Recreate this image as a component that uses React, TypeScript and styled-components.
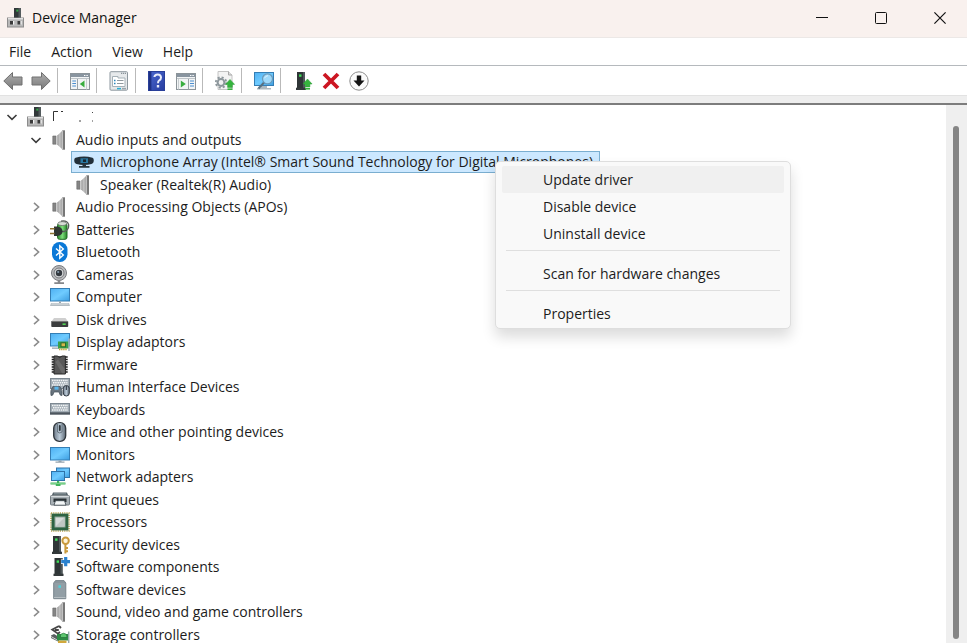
import React from 'react';
import styled, { createGlobalStyle, css } from 'styled-components';

const GlobalStyle = createGlobalStyle`
  * { box-sizing: border-box; }
  html, body { margin: 0; background: #fff; }
  body, button {
    font-family: "Open Sans", "Noto Sans", sans-serif;
    font-size: 14px;
    line-height: 22px;
    color: #1c1c1c;
  }
  button { border: 0; padding: 0; background: transparent; }
`;

const Window = styled.div`
  display: flex;
  flex-direction: column;
  height: 100vh;
  overflow: hidden;
`;

const TitleBar = styled.header`
  display: flex;
  align-items: center;
  gap: 6px;
  flex: none;
  height: 38px;
  padding: 0 4px 2px 6px;
  background: #f9f1ee;
  border-bottom: 1px solid #ece8e6;
`;

const Title = styled.h1`
  flex: 1;
  margin: 0;
  font-size: 14px;
  font-weight: 400;
  color: #111;
`;

const CaptionButtons = styled.div`
  display: flex;
  gap: 12px;
`;

const CaptionButton = styled.button`
  display: grid;
  place-items: center;
  width: 47px;
  height: 32px;
`;

const MenuBar = styled.nav`
  display: flex;
  align-items: center;
  flex: none;
  gap: 20px;
  height: 28px;
  padding: 0 9px;
  border-bottom: 1px solid #b5b9bd;
`;

const MenuBarButton = styled.button`
  line-height: 24px;
`;

const Toolbar = styled.div`
  display: flex;
  align-items: center;
  flex: none;
  height: 29px;
`;

const ToolGroup = styled.div<{ $first?: boolean }>`
  display: flex;
  align-items: center;
  gap: 8px;
  height: 25px;
  padding: 0 6px 0 ${(p) => (p.$first ? 3 : 12)}px;
  &:not(:last-child) { border-right: 1px solid #b9b9b9; }
`;

const ToolButton = styled.button`
  display: grid;
  place-items: center;
  width: 20px;
  height: 24px;
`;

const Strip = styled.div`
  flex: none;
  height: 10px;
  background: #eee;
  border-top: 1px solid #e2e2e2;
  border-bottom: 2px solid #7d7d7d;
`;

const Body = styled.main`
  display: flex;
  flex: 1;
  min-height: 0;
`;

const Tree = styled.ul`
  flex: 1;
  min-width: 0;
  margin: 0;
  padding: 1px 0 0;
  list-style: none;
  overflow: hidden;
`;

const TreeRow = styled.li<{ $level: number }>`
  display: flex;
  align-items: center;
  position: relative;
  height: 22px;
  padding-left: ${(p) => 2 + p.$level * 24}px;
  &:nth-child(even) { height: 23px; }
`;

const Expander = styled.button`
  display: grid;
  place-items: center;
  flex: none;
  width: 20px;
  height: 20px;
`;

const ExpanderSpace = styled.span`
  flex: none;
  width: 20px;
`;

const Item = styled.span<{ $selected?: boolean }>`
  display: flex;
  align-items: center;
  gap: 6px;
  height: 22px;
  margin-left: 1px;
  padding: 0 6px 0 2px;
  border: 1px solid transparent;
  white-space: nowrap;
  ${(p) =>
    p.$selected &&
    css`
      background: #cce8ff;
      border-color: #7aaed0;
    `}
`;

const ScrollTrack = styled.div`
  flex: none;
  width: 21px;
  padding: 21px 8px 4px 7px;
  background: #efefef;
`;

const ScrollThumb = styled.div`
  height: 100%;
  border-radius: 3px;
  background: #858585;
`;

const ContextMenu = styled.div`
  position: absolute;
  z-index: 2;
  top: 10px;
  left: 495px;
  width: 296px;
  padding: 4px 6px 1px;
  background: #f9f9f9;
  border: 1px solid #dedede;
  border-radius: 5px;
  box-shadow: 0 8px 14px rgba(0, 0, 0, 0.14);
`;

const ContextItem = styled.button<{ $active?: boolean }>`
  display: block;
  width: 100%;
  height: 27px;
  padding-left: 41px;
  border-radius: 2px;
  text-align: left;
  line-height: 26px;
  background: ${(p) => (p.$active ? '#f0f0f0' : 'transparent')};
`;

const Divider = styled.hr`
  margin: 3px 4px 9px;
  border: 0;
  border-top: 1px solid #dfdfdf;
`;

type IconProps = { children: React.ReactNode };

const Icon = ({ children }: IconProps) => (
  <svg width="20" height="20" viewBox="0 0 20 20" aria-hidden="true">
    {children}
  </svg>
);

const GradientDefs = styled.svg`
  display: block;
`;

const Gradients = () => (
  <GradientDefs width="0" height="0" aria-hidden="true">
    <defs>
      <linearGradient id="metal" x1="0" x2="1">
        <stop offset="0" stopColor="#8f8f8f" />
        <stop offset="0.5" stopColor="#c4c4c4" />
        <stop offset="1" stopColor="#8a8a8a" />
      </linearGradient>
      <linearGradient id="screen" x1="0" y1="0" x2="1" y2="1">
        <stop offset="0" stopColor="#4fb0f2" />
        <stop offset="0.5" stopColor="#6fcbff" />
        <stop offset="1" stopColor="#3d9de0" />
      </linearGradient>
      <linearGradient id="arrow" x1="0" y1="0" x2="0" y2="1">
        <stop offset="0" stopColor="#adadad" />
        <stop offset="1" stopColor="#7a7a7a" />
      </linearGradient>
      <linearGradient id="help" x1="0" y1="0" x2="1" y2="1">
        <stop offset="0" stopColor="#4b68d0" />
        <stop offset="1" stopColor="#263c9f" />
      </linearGradient>
      <linearGradient id="green" x1="0" x2="1">
        <stop offset="0" stopColor="#2c8a2c" />
        <stop offset="0.5" stopColor="#7fe07c" />
        <stop offset="1" stopColor="#248026" />
      </linearGradient>
      <linearGradient id="steel" x1="0" x2="1">
        <stop offset="0" stopColor="#6d7a88" />
        <stop offset="0.5" stopColor="#bccbd8" />
        <stop offset="1" stopColor="#5a6672" />
      </linearGradient>
    </defs>
  </GradientDefs>
);

const HostIcon = () => (
  <Icon>
    <rect x="8" y="0" width="7" height="11" fill="#32383a" />
    <rect x="12.5" y="0" width="2.5" height="11" fill="#535b5d" />
    <rect x="10.3" y="1.6" width="2" height="2" fill="#35a94a" />
    <rect x="1.5" y="10" width="16" height="9" fill="#b8b8b8" stroke="#8c8c8c" />
    <path d="M2 10.7H17" stroke="#e2e2e2" strokeWidth="1.4" />
    <path d="M4 13H7V16.5H4ZM11.5 13H14.5V16.5H11.5Z" fill="#3a3a3a" />
    <path d="M7 13H8.2V16.5H7ZM14.5 13H15.7V16.5H14.5Z" fill="#f4f4f4" />
  </Icon>
);

const SpeakerIcon = () => (
  <Icon>
    <path d="M2.8 6H6.2V14.2H2.8Z" fill="#858585" stroke="#666" strokeWidth="0.6" />
    <path d="M6.8 6L12.8 .3V19.7L6.8 14.2Z" fill="url(#metal)" />
    <path d="M6.9 6V14.2" stroke="#efefef" strokeWidth="0.8" />
    <path d="M12.5 .3H15V19.7H12.5Z" fill="#777" />
    <path d="M12.3 1V19" stroke="#d6d6d6" strokeWidth="0.9" />
  </Icon>
);

const MicIcon = () => (
  <Icon>
    <path d="M1.5 5.8Q10 3 18.5 5.8Q20 6.4 19.8 9Q19.5 11.8 17.5 12Q10 13.8 2.5 12Q.5 11.8 .2 9Q0 6.4 1.5 5.8Z" fill="#22303a" />
    <rect x="6.5" y="6.3" width="7.5" height="4.7" fill="#2878a3" />
    <path d="M9 7.4H12V10H9Z" fill="#17262f" />
    <path d="M8.5 12.5H12V14H15.5V15.8H5V14H8.5Z" fill="#26343d" />
  </Icon>
);

const BatteryIcon = () => (
  <Icon>
    <rect x="7.5" y="3.5" width="9.5" height="15.8" rx="2" fill="url(#green)" stroke="#206a24" />
    <ellipse cx="12.2" cy="3.6" rx="4.4" ry="2" fill="#d7ddd6" stroke="#626a62" strokeWidth="0.7" />
    <path d="M11 1.2Q17 0 18.6 4.5Q19.3 9.5 14.5 11.5H11" fill="none" stroke="#5a5f5c" strokeWidth="1.3" />
    <path d="M4 6.5H7Q12.5 7 12.5 11.3T7 16H4Z" fill="#2f3632" />
    <path d="M0 8.8H4.5M0 13.6H4.5" stroke="#8f7330" strokeWidth="1.5" />
  </Icon>
);

const BluetoothIcon = () => (
  <Icon>
    <rect x="2" y="0" width="15.5" height="20" rx="7.5" fill="#0a78d7" />
    <path d="M6 6.5L13.3 13L9.8 16.2V3.8L13.3 7L6 13.5" fill="none" stroke="#fff" strokeWidth="1.4" />
  </Icon>
);

const CameraIcon = () => (
  <Icon>
    <circle cx="9" cy="8" r="7.5" fill="#b9babc" stroke="#797b7f" />
    <circle cx="9" cy="8" r="5" fill="#d6d8da" stroke="#77797c" />
    <circle cx="9" cy="8" r="3.2" fill="#33383e" />
    <circle cx="8.2" cy="7" r="1.1" fill="#8499aa" />
    <path d="M7.7 15H10.3V17.2H14V19H4.3V17.2H7.7Z" fill="#85878a" />
  </Icon>
);

const ComputerIcon = () => (
  <Icon>
    <rect x=".5" y="1.5" width="19" height="12.5" fill="url(#screen)" stroke="#347eb5" />
    <path d="M9 14.5H11V16H9Z" fill="#9aa6ae" />
    <path d="M1 16H19L20 19H0Z" fill="#b3bcc2" />
    <path d="M1.5 17H18.5" stroke="#e6eaec" strokeWidth="0.8" />
  </Icon>
);

const DiskIcon = () => (
  <Icon>
    <path d="M4 8H15.5L18 11.5H1.5Z" fill="#cfcfcf" />
    <rect x="1.3" y="11" width="16.9" height="6" rx=".8" fill="#3b3d3e" />
    <path d="M1.5 11.5H18" stroke="#777" />
    <rect x="12.5" y="13.4" width="3.2" height="1.6" fill="#53d553" />
  </Icon>
);

const DisplayIcon = () => (
  <Icon>
    <rect x=".5" y="1.5" width="19" height="12.5" fill="url(#screen)" stroke="#347eb5" />
    <rect x="2" y="15.5" width="7" height="1.3" fill="#9ba5ad" />
    <rect x="8" y="9.5" width="11" height="7" fill="#39a04a" />
    <path d="M19 6.5V19" stroke="#a9b6bc" strokeWidth="1.5" />
    <rect x="11" y="10.8" width="4.5" height="4" fill="#d6b549" stroke="#276b30" />
    <path d="M9 17.4H17" stroke="#c9a638" strokeWidth="1.8" strokeDasharray="1.4 .7" />
  </Icon>
);

const FirmwareIcon = () => (
  <Icon>
    <path d="M1.7 2H17.7M1.7 4.5H17.7M1.7 7H17.7M1.7 9.5H17.7M1.7 12H17.7M1.7 14.5H17.7M1.7 17H17.7" stroke="#1f1f1f" strokeWidth="1.4" />
    <path d="M4 1H7.3Q9.7 4 12.1 1H15.4V19H4Z" fill="#585858" stroke="#292929" />
    <path d="M5.5 7L12 18.3H14.8V14L8 4.5Z" fill="#6a6a6a" />
  </Icon>
);

const Keys = ({ y = 0, dark = true }: { y?: number; dark?: boolean }) => (
  <g>
    <rect x=".5" y={4.5 + y} width="19" height="10" fill="#a3adb5" stroke="#7e8992" />
    <path
      d={`M2 ${6.5 + y}H18M3 ${8.8 + y}H17.5M2 ${11 + y}H18`}
      stroke="#f4f6f7"
      strokeWidth="1.4"
      strokeDasharray="1.5 .7"
    />
    {dark && <rect x="0" y={13.3 + y} width="20" height="2.4" fill="#4d565e" />}
  </g>
);

const HidIcon = () => (
  <Icon>
    <Keys y={-3} dark={false} />
    <path d="M1 18.5Q-.3 13 3 9.5H10Q13 13 12 18.5Q10 19.3 9 15H4Q3 19.3 1 18.5Z" fill="#68747e" stroke="#46515a" strokeWidth="0.7" />
    <rect x="4.5" y="9.7" width="4" height="3" fill="#5cb5ea" />
    <rect x="13.3" y="8.5" width="6" height="10.5" rx="3" fill="url(#steel)" stroke="#303942" />
    <path d="M16.3 9V13" stroke="#222a31" />
  </Icon>
);

const KeyboardIcon = () => (
  <Icon>
    <Keys y={-1} />
  </Icon>
);

const MouseIcon = () => (
  <Icon>
    <rect x="3.7" y=".7" width="12" height="18.6" rx="5.5" fill="url(#steel)" stroke="#30363c" strokeWidth="1.3" />
    <path d="M7.5 1.5V10Q9.7 12 12 10V1.5" fill="#aab9c6" stroke="#59646f" strokeWidth="0.8" />
    <rect x="8.9" y="3" width="1.8" height="6" rx=".9" fill="#2d3339" />
  </Icon>
);

const MonitorIcon = () => (
  <Icon>
    <rect x=".5" y="2.5" width="19" height="12.5" fill="url(#screen)" stroke="#347eb5" />
    <path d="M8.5 15.5H11.5V16.5H14.5V17.8H5.5V16.5H8.5Z" fill="#93a3ae" />
  </Icon>
);

const NetworkIcon = () => (
  <Icon>
    <rect x="6.5" y="1" width="13" height="9.5" fill="url(#screen)" stroke="#2f74a9" />
    <rect x="1.5" y="4.5" width="13" height="9" fill="url(#screen)" stroke="#2f74a9" />
    <path d="M7 14H9.2V15.5H15.5V17.5H10.5V19H5.8V17.5H.5V15.5H7Z" fill="#43b55c" />
    <path d="M1 16.5H15" stroke="#8fdc9c" strokeWidth="0.7" />
  </Icon>
);

const PrinterIcon = () => (
  <Icon>
    <path d="M3 2.5H17L18.5 6H1.5Z" fill="#59656c" />
    <path d="M4 3.8H16" stroke="#8e999f" strokeWidth="1" />
    <rect x=".5" y="5.5" width="19" height="9.5" rx="1" fill="#a7afb4" stroke="#767f85" />
    <path d="M3.5 8.5H16.5V12H3.5Z" fill="#2b3236" />
    <path d="M5.5 10.7H14.5L16 15.2H4Z" fill="#f4f7f8" stroke="#39434a" strokeWidth="0.8" />
    <path d="M1.2 6.4H18.8" stroke="#dce0e2" />
  </Icon>
);

const ProcessorIcon = () => (
  <Icon>
    <rect x="1" y="1" width="18" height="18" fill="none" stroke="#b7a454" strokeWidth="1.6" strokeDasharray="1.2 1" />
    <rect x="1.6" y="1.6" width="16.8" height="16.8" fill="#2d6342" />
    <rect x="5" y="5" width="10" height="10" fill="#d7dcda" stroke="#8fa599" />
    <path d="M5.5 14.5L14.5 5.5V14.5Z" fill="#c0c7c4" />
  </Icon>
);

const Tower = ({ x = 3 }: { x?: number }) => (
  <g transform={`translate(${x} 0)`}>
    <path d="M.5 1H8.5V17H.5Z" fill="#2f3537" />
    <path d="M6.5 1H8.5V17H6.5Z" fill="#4f585b" />
    <rect x="2.6" y="3.4" width="2.4" height="2.4" fill="#3fe05a" />
    <path d="M-.5 16.7H9.5V19H-.5Z" fill="#34393b" />
  </g>
);

const SecurityIcon = () => (
  <Icon>
    <Tower x={2.5} />
    <circle cx="15.6" cy="5.8" r="3.2" fill="#fff4d7" stroke="#c99a3d" strokeWidth="2" />
    <path d="M15.4 9V18.5M15.6 13H18M15.6 16.2H18" stroke="#c99a3d" strokeWidth="2" />
  </Icon>
);

const ComponentIcon = () => (
  <Icon>
    <Tower x={4} />
    <path d="M15.7 0V9.4M11 4.7H20" stroke="#fff" strokeWidth="4.6" />
    <path d="M15.7 0V9.2M11.2 4.6H20" stroke="#2b82cf" strokeWidth="3.2" />
  </Icon>
);

const SoftwareIcon = () => (
  <Icon>
    <path d="M3.7 3L5.5 .6H14L15.8 3V18.7H3.7Z" fill="#89959c" stroke="#7b878e" />
    <path d="M4.5 3H15V17.8H4.5Z" fill="#929ea5" />
    <rect x="8.4" y="5.3" width="2.6" height="2.6" fill="#50d0d8" />
    <path d="M4 17.5H15.5" stroke="#b6bec2" />
  </Icon>
);

const StorageIcon = () => (
  <Icon>
    <path d="M9 1L2.2 4.7L8 8.7L10 7M9 1L11 3M4.9 5H8.8" fill="none" stroke="#474747" strokeWidth="1.8" />
    <path d="M1 10.5L4 9L9 12V17L1 13Z" fill="#5a5f61" />
    <path d="M1 11.5L8 15.5" stroke="#d4d4d4" />
    <path d="M7 9H18V15.5H7Z" fill="#2e8b45" />
    <path d="M10.5 9.5Q13.5 7 16.5 9.5L17 12.5H10.5Z" fill="#5dc66f" stroke="#24713a" strokeWidth="0.7" />
    <path d="M18.7 6.5V19" stroke="#98a9ad" strokeWidth="1.5" />
    <path d="M8 17H16.5" stroke="#d1a83d" strokeWidth="2.8" />
  </Icon>
);

const ArrowShape = ({ flip }: { flip?: boolean }) => (
  <Icon>
    <path
      d="M.8 10L9.5 1.5V6H19V14H9.5V18.5Z"
      transform={flip ? 'matrix(-1 0 0 1 20 0)' : undefined}
      fill="url(#arrow)"
      stroke="#707070"
      strokeLinejoin="round"
    />
  </Icon>
);

const GreenUp = ({ x, y }: { x: number; y: number }) => (
  <g transform={`translate(${x} ${y})`}>
    <path d="M5 0L9.6 5H7.4V8H2.6V5H.4Z" fill="#35b43d" stroke="#2b9a34" strokeWidth="0.5" />
    <path d="M2.5 9.8H7.5" stroke="#35b43d" strokeWidth="1.6" />
  </g>
);

const PanelFrame = () => (
  <g>
    <rect x=".5" y="2.5" width="19" height="16" fill="#f2f4f5" stroke="#8c9499" />
    <path d="M1 3H19V6H1Z" fill="#8995a0" />
    <path d="M14 4.5H18" stroke="#fff" strokeDasharray="1 .6" />
    <path d="M1 7.5H19" stroke="#bfc5c9" />
  </g>
);

const ShowTreeIcon = () => (
  <Icon>
    <PanelFrame />
    <path d="M7.5 8V18.5" stroke="#9aa2a7" />
    <path d="M2.3 10H6M2.3 12.5H6M2.3 15H6" stroke="#4b8ed0" strokeWidth="1.2" />
    <path d="M14.5 9.5V16.5L9.8 13Z" fill="#38ad3e" />
    <path d="M16.5 8V18.5" stroke="#c7cdd0" />
  </Icon>
);

const ActionPaneIcon = () => (
  <Icon>
    <PanelFrame />
    <path d="M12.5 8V18.5" stroke="#9aa2a7" />
    <path d="M14 10H18M14 12.5H18M14 15H18" stroke="#4b8ed0" strokeWidth="1.2" />
    <path d="M4.8 9.5V16.5L9.8 13Z" fill="#38ad3e" />
    <path d="M2.5 8V18.5" stroke="#c7cdd0" />
  </Icon>
);

const PropertiesIcon = () => (
  <Icon>
    <rect x="1" y=".7" width="17.5" height="18.5" rx="1" fill="#e6e9eb" stroke="#8d979e" />
    <path d="M12 2.3H17" stroke="#747e85" strokeDasharray="1.2 .7" />
    <path d="M3.5 5.5H9V7H16V15.5H3.5Z" fill="#fff" stroke="#a6b1b7" />
    <path d="M5 9.5H6.5M5 12.5H6.5" stroke="#2b87bd" strokeWidth="1.4" />
    <path d="M8 9.5H14.5M8 12.5H14.5" stroke="#90999f" />
    <path d="M8 17.6H12" stroke="#2aaed3" strokeWidth="1.5" />
    <path d="M13 17.6H17" stroke="#9ba4aa" strokeWidth="1.5" />
  </Icon>
);

const HelpIcon = () => (
  <Icon>
    <rect x=".5" y=".5" width="16" height="19" fill="url(#help)" stroke="#293f99" />
    <path d="M1 .5H3.4V19.5H1Z" fill="#1e3084" />
    <path d="M6.4 6Q6.6 3.4 9.7 3.4T13 6.4Q13 8.2 11.3 9.3Q10 10.2 10 12.3" fill="none" stroke="#e8ecfa" strokeWidth="2" />
    <rect x="8.8" y="14" width="2.4" height="2.5" fill="#e8ecfa" />
  </Icon>
);

const UpdateIcon = () => (
  <Icon>
    <path d="M3 .5H13.5L17 4V18.5H3Z" fill="#f3f3f3" stroke="#c4c4c4" />
    <path d="M13.5 .5V4H17" fill="#ddd" stroke="#a8a8a8" />
    <circle cx="6" cy="11.5" r="5.2" fill="none" stroke="#8c969b" strokeWidth="1.8" strokeDasharray="2.1 1.98" />
    <circle cx="6" cy="11.5" r="3.4" fill="#f2f2f2" stroke="#8c969b" strokeWidth="2" />
    <GreenUp x={10} y={8.4} />
  </Icon>
);

const ScanIcon = () => (
  <Icon>
    <rect x=".5" y="1.5" width="19" height="13" fill="url(#screen)" stroke="#347eb5" />
    <path d="M7 15H13V17H17V18.6H3V17H7Z" fill="#aeb9bf" />
    <path d="M10.5 11L4.5 17.5" stroke="#587080" strokeWidth="2" />
    <circle cx="13.5" cy="7.8" r="5" fill="#9ed9fa" stroke="#6b9aba" strokeWidth="1.2" />
    <path d="M10.5 7.2Q11.5 4.8 14 4.7" fill="none" stroke="#dff3ff" />
  </Icon>
);

const AddDriverIcon = () => (
  <Icon>
    <Tower x={3.5} />
    <GreenUp x={9.5} y={8} />
  </Icon>
);

const RemoveIcon = () => (
  <Icon>
    <path d="M3 3L17 17M17 3L3 17" stroke="#cc1622" strokeWidth="3.8" />
  </Icon>
);

const DisableIcon = () => (
  <Icon>
    <circle cx="10" cy="10" r="9.2" fill="#fbfbfb" stroke="#8d8d8d" />
    <path d="M7.8 4.5H12.2V9.5H15.5L10 15.5L4.5 9.5H7.8Z" fill="#151515" />
  </Icon>
);

const Chevron = ({ open }: { open?: boolean }) => (
  <svg width="12" height="12" viewBox="0 0 12 12" aria-hidden="true">
    <path
      d={open ? 'M1.5 4L6 8.4L10.5 4' : 'M4 1.8L8.6 6L4 10.2'}
      fill="none"
      stroke={open ? '#3c3c3c' : '#8b8b8b'}
      strokeWidth="1.6"
    />
  </svg>
);

const ErasedName = () => (
  <svg width="44" height="14" viewBox="0 0 44 14" role="img" aria-label="Computer name">
    <path d="M1.5 11V1.5H6M9 1.5H11" fill="none" stroke="#333" strokeWidth="1" />
    <path d="M27 11H29M40 2.5H41M40 11H41" stroke="#444" strokeWidth="1" />
  </svg>
);

type Node = { label: string; level: number; icon: React.ReactNode; open?: boolean; leaf?: boolean; selected?: boolean };

const nodes: Node[] = [
  { label: '', level: 0, icon: <HostIcon />, open: true },
  { label: 'Audio inputs and outputs', level: 1, icon: <SpeakerIcon />, open: true },
  {
    label: 'Microphone Array (Intel® Smart Sound Technology for Digital Microphones)',
    level: 2,
    icon: <MicIcon />,
    leaf: true,
    selected: true,
  },
  { label: 'Speaker (Realtek(R) Audio)', level: 2, icon: <SpeakerIcon />, leaf: true },
  { label: 'Audio Processing Objects (APOs)', level: 1, icon: <SpeakerIcon /> },
  { label: 'Batteries', level: 1, icon: <BatteryIcon /> },
  { label: 'Bluetooth', level: 1, icon: <BluetoothIcon /> },
  { label: 'Cameras', level: 1, icon: <CameraIcon /> },
  { label: 'Computer', level: 1, icon: <ComputerIcon /> },
  { label: 'Disk drives', level: 1, icon: <DiskIcon /> },
  { label: 'Display adaptors', level: 1, icon: <DisplayIcon /> },
  { label: 'Firmware', level: 1, icon: <FirmwareIcon /> },
  { label: 'Human Interface Devices', level: 1, icon: <HidIcon /> },
  { label: 'Keyboards', level: 1, icon: <KeyboardIcon /> },
  { label: 'Mice and other pointing devices', level: 1, icon: <MouseIcon /> },
  { label: 'Monitors', level: 1, icon: <MonitorIcon /> },
  { label: 'Network adapters', level: 1, icon: <NetworkIcon /> },
  { label: 'Print queues', level: 1, icon: <PrinterIcon /> },
  { label: 'Processors', level: 1, icon: <ProcessorIcon /> },
  { label: 'Security devices', level: 1, icon: <SecurityIcon /> },
  { label: 'Software components', level: 1, icon: <ComponentIcon /> },
  { label: 'Software devices', level: 1, icon: <SoftwareIcon /> },
  { label: 'Sound, video and game controllers', level: 1, icon: <SpeakerIcon /> },
  { label: 'Storage controllers', level: 1, icon: <StorageIcon /> },
];

const toolGroups: { name: string; icon: React.ReactNode }[][] = [
  [
    { name: 'Back', icon: <ArrowShape /> },
    { name: 'Forward', icon: <ArrowShape flip /> },
  ],
  [{ name: 'Show console tree', icon: <ShowTreeIcon /> }],
  [{ name: 'Properties', icon: <PropertiesIcon /> }],
  [
    { name: 'Help', icon: <HelpIcon /> },
    { name: 'Show action pane', icon: <ActionPaneIcon /> },
  ],
  [{ name: 'Update device driver', icon: <UpdateIcon /> }],
  [{ name: 'Scan for hardware changes', icon: <ScanIcon /> }],
  [
    { name: 'Add drivers', icon: <AddDriverIcon /> },
    { name: 'Uninstall device', icon: <RemoveIcon /> },
    { name: 'Disable device', icon: <DisableIcon /> },
  ],
];

const DeviceMenu = () => (
  <ContextMenu role="menu">
    <ContextItem role="menuitem" $active>Update driver</ContextItem>
    <ContextItem role="menuitem">Disable device</ContextItem>
    <ContextItem role="menuitem">Uninstall device</ContextItem>
    <Divider />
    <ContextItem role="menuitem">Scan for hardware changes</ContextItem>
    <Divider />
    <ContextItem role="menuitem">Properties</ContextItem>
  </ContextMenu>
);

export default function App() {
  return (
    <Window>
      <GlobalStyle />
      <Gradients />
      <TitleBar>
        <HostIcon />
        <Title>Device Manager</Title>
        <CaptionButtons>
          <CaptionButton aria-label="Minimize">
            <svg width="12" height="12" viewBox="0 0 12 12">
              <path d="M0 5.5H12" stroke="#111" />
            </svg>
          </CaptionButton>
          <CaptionButton aria-label="Maximize">
            <svg width="12" height="12" viewBox="0 0 12 12">
              <rect x=".5" y=".5" width="11" height="11" rx="1" fill="none" stroke="#111" />
            </svg>
          </CaptionButton>
          <CaptionButton aria-label="Close">
            <svg width="12" height="12" viewBox="0 0 12 12">
              <path d="M.4 .4L11.6 11.6M11.6 .4L.4 11.6" stroke="#111" strokeWidth="1.2" />
            </svg>
          </CaptionButton>
        </CaptionButtons>
      </TitleBar>
      <MenuBar>
        {['File', 'Action', 'View', 'Help'].map((name) => (
          <MenuBarButton key={name}>{name}</MenuBarButton>
        ))}
      </MenuBar>
      <Toolbar role="toolbar">
        {toolGroups.map((group, i) => (
          <ToolGroup key={i} $first={i === 0}>
            {group.map((tool) => (
              <ToolButton key={tool.name} aria-label={tool.name}>
                {tool.icon}
              </ToolButton>
            ))}
          </ToolGroup>
        ))}
      </Toolbar>
      <Strip />
      <Body>
        <Tree role="tree">
          {nodes.map((node, i) => (
            <TreeRow key={i} role="treeitem" aria-selected={!!node.selected} $level={node.level}>
              {node.leaf ? (
                <ExpanderSpace />
              ) : (
                <Expander aria-label={node.open ? 'Collapse' : 'Expand'}>
                  <Chevron open={node.open} />
                </Expander>
              )}
              <Item $selected={node.selected}>
                {node.icon}
                {node.label ? <span>{node.label}</span> : <ErasedName />}
              </Item>
              {node.selected && <DeviceMenu />}
            </TreeRow>
          ))}
        </Tree>
        <ScrollTrack>
          <ScrollThumb />
        </ScrollTrack>
      </Body>
    </Window>
  );
}
